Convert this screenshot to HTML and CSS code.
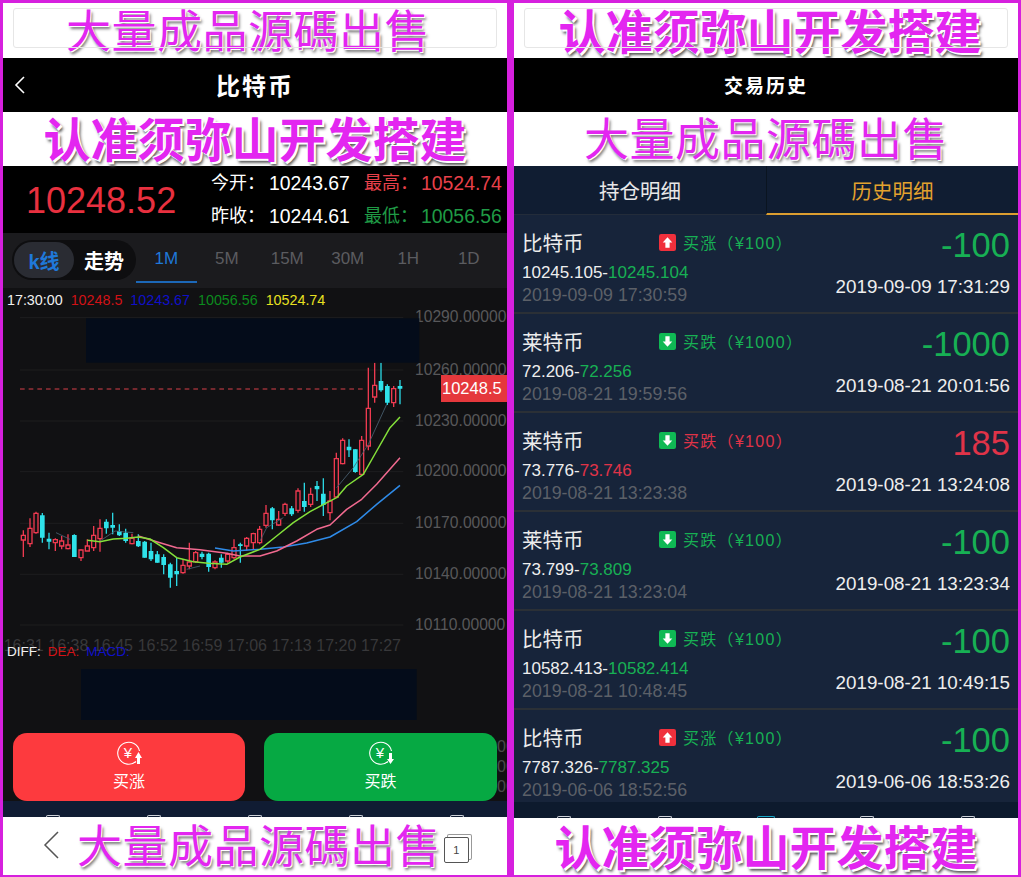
FILE: index.html
```html
<!DOCTYPE html>
<html lang="zh">
<head>
    <meta charset="UTF-8">
    <meta name="viewport" content="width=device-width, initial-scale=1.0">
    <title>比特币</title>
    <link rel="stylesheet" href="styles.css">
</head>
<body>
    <div class="screens">
        <div class="phone">
            <div class="banner thin framed shift-left">大量成品源碼出售</div>
            <div class="navbar">
                <svg class="back" width="12" height="20" viewBox="0 0 12 20"><path d="M10 2 2 10l8 8" fill="none" stroke="#fff" stroke-width="1.6"/></svg>
                <span>比特币</span>
            </div>
            <div class="banner bold">认准须弥山开发搭建</div>

            <div class="quote">
                <div class="last-price">10248.52</div>
                <div class="quote-grid">
                    <span>今开：</span><span>10243.67</span><span class="red">最高：</span><span class="red">10524.74</span>
                    <span>昨收：</span><span>10244.61</span><span class="green">最低：</span><span class="green">10056.56</span>
                </div>
            </div>

            <div class="periods">
                <div class="switch">
                    <span class="switch-item active">k线</span>
                    <span class="switch-item">走势</span>
                </div>
                <span class="period active">1M</span>
                <span class="period">5M</span>
                <span class="period">15M</span>
                <span class="period">30M</span>
                <span class="period">1H</span>
                <span class="period">1D</span>
            </div>

            <div class="chart">
                <svg class="chart-svg" viewBox="9 -39 1512 1338" width="504" height="446">
                    <g class="grid-lines">
                        <path d="M60 50H1210M60 207H1210M60 360H1210M60 512H1210M60 667H1210M60 820H1210M60 972H1210"/>
                    </g>
                    <path class="last-line" d="M60 264H1090"/>
                    <g class="y-labels">
                        <text x="1245" y="64">10290.00000</text>
                        <text x="1245" y="221">10260.00000</text>
                        <text x="1245" y="374">10230.00000</text>
                        <text x="1245" y="526">10200.00000</text>
                        <text x="1245" y="681">10170.00000</text>
                        <text x="1245" y="834">10140.00000</text>
                        <text x="1245" y="986">10110.00000</text>
                    </g>
                    <g class="x-labels">
                        <text x="71" y="1051">16:31</text>
                        <text x="205" y="1051">16:38</text>
                        <text x="339" y="1051">16:45</text>
                        <text x="473" y="1051">16:52</text>
                        <text x="607" y="1051">16:59</text>
                        <text x="741" y="1051">17:06</text>
                        <text x="875" y="1051">17:13</text>
                        <text x="1009" y="1051">17:20</text>
                        <text x="1143" y="1051">17:27</text>
                    </g>

                    <path class="wick-red" d="M70 688V768M90 652V738M108 632V698M166 712V750M185 705V745M204 700V745M243 745V780M262 715V750M281 675V750M300 655V752M396 698V730M549 775V818M568 725V805M587 750V785M645 778V805M683 755V785M702 715V775M740 708V750M760 695V745M779 675V730M798 612V680M836 630V675M855 605V645M894 562V635M932 560V618M990 570V658M1009 455V590M1028 412V490M1085 405V522M1105 200V448M1124 185V305M1181 255V318"/>
                    <path class="body-red" d="M64 703H76V717H64ZM84 682H96V728H84ZM102 637H114V695H102ZM160 716H172V725H160ZM179 720H191V735H179ZM198 732H210V743H198ZM237 747H249V770H237ZM256 735H268V750H256ZM275 703H287V740H275ZM294 682H306V713H294ZM390 712H402V728H390ZM543 793H555V815H543ZM562 783H574V795H562ZM581 755H593V782H581ZM639 783H651V800H639ZM677 760H689V780H677ZM696 740H708V770H696ZM734 712H746V735H734ZM754 698H766V725H754ZM773 685H785V725H773ZM792 637H804V673H792ZM830 655H842V672H830ZM849 610H861V637H849ZM888 570H900V628H888ZM926 580H938V610H926ZM984 600H996V635H984ZM1003 473H1015V588H1003ZM1022 418H1034V488H1022ZM1079 418H1091V520H1079ZM1099 322H1111V435H1099ZM1118 253H1130V288H1118ZM1175 263H1187V305H1175Z"/>
                    <path class="wick-cyan" d="M127 636V725M147 695V745M223 700V768M319 655V698M338 635V700M358 670V705M377 683V725M415 700V738M434 720V770M453 725V780M472 750V785M491 760V820M511 785V860M530 770V855M606 752V775M626 755V812M664 760V800M721 725V785M817 618V685M875 615V645M913 545V632M951 540V600M970 532V645M1047 415V468M1066 445V515M1143 185V272M1162 250V312M1200 237V310"/>
                    <path class="body-cyan" d="M120 643H134V710H120ZM140 713H154V722H140ZM216 702H230V768H216ZM312 662H326V682H312ZM331 672H345V680H331ZM351 690H365V703H351ZM370 695H384V720H370ZM408 720H422V736H408ZM427 722H441V770H427ZM446 750H460V775H446ZM465 760H479V785H465ZM484 768H498V792H484ZM504 790H518V830H504ZM523 810H537V820H523ZM599 758H613V768H599ZM619 758H633V798H619ZM657 770H671V785H657ZM714 730H728V735H714ZM810 622H824V658H810ZM868 622H882V640H868ZM906 600H920V618H906ZM944 555H958V565H944ZM963 578H977V612H963ZM1040 437H1054V448H1040ZM1059 445H1073V513H1059ZM1136 240H1150V268H1136ZM1155 255H1169V305H1155ZM1193 255H1207V263H1193Z"/>

                    <path class="ma ma-slate" d="M168 695 210 715M300 720 345 690 400 695M560 805 600 795M780 720 800 680 850 650M1010 560 1060 500 1105 430 1160 310"/>
                    <path class="ma ma-blue" d="M645 741 700 750 780 745 850 738 920 726 990 708 1070 662 1130 610 1200 553"/>
                    <path class="ma ma-pink" d="M415 705 470 722 530 740 600 746 680 757 720 765 780 765 830 750 890 720 950 685 990 672 1040 625 1085 595 1130 550 1200 470"/>
                    <path class="ma ma-green" d="M262 718 300 722 340 714 380 712 415 708 450 714 490 740 530 770 580 782 625 787 680 790 720 768 780 745 830 705 880 665 930 632 975 608 1010 590 1040 555 1090 520 1130 450 1170 380 1200 348"/>

                    <rect class="cover" x="258" y="52" width="1000" height="133"/>
                    <rect class="cover" x="243" y="1104" width="1007" height="153"/>
                </svg>

                <div class="legend top-legend">
                    <span class="l-white">17:30:00</span>
                    <span class="l-red">10248.5</span>
                    <span class="l-blue">10243.67</span>
                    <span class="l-green">10056.56</span>
                    <span class="l-yellow">10524.74</span>
                </div>
                <div class="price-tag">10248.5</div>
                <div class="legend diff-legend">
                    <span class="l-white">DIFF:</span>
                    <span class="l-red">DEA:</span>
                    <span class="l-blue">MACD:</span>
                </div>
            </div>

            <div class="actions">
                <div class="trade-btn up">
                    <svg width="26" height="26" viewBox="0 0 26 26"><path d="M20 20.500A11 11 0 1 1 23.500 10" fill="none" stroke="#fff" stroke-width="1.100"/><text x="12" y="17" text-anchor="middle" class="yen">¥</text><path d="M22.500 11 26 17h-2v6h-3v-6h-2z" fill="#fff"/></svg>
                    <span>买涨</span>
                </div>
                <div class="trade-btn down">
                    <svg width="26" height="26" viewBox="0 0 26 26"><path d="M20 20.500A11 11 0 1 1 23.500 10" fill="none" stroke="#fff" stroke-width="1.100"/><text x="12" y="17" text-anchor="middle" class="yen">¥</text><path d="M21 12h3v6h2l-3.500 5L19 18h2z" fill="#fff"/></svg>
                    <span>买跌</span>
                </div>
                <div class="cut-axis"><span>00</span><span>00</span><span>00</span></div>
            </div>

            <div class="tabbar">
                <i></i><i></i><i></i><i></i><i></i>
            </div>
            <div class="banner thin shift-right bottom">
                <svg class="browser-back" width="18" height="30" viewBox="0 0 18 30"><path d="M16 2 3 15l13 13" fill="none" stroke="#555" stroke-width="1.5"/></svg>
                大量成品源碼出售
                <div class="tab-count"><span>1</span></div>
            </div>
        </div>

        <div class="phone">
            <div class="banner bold framed shift-right-small">认准须弥山开发搭建</div>
            <div class="navbar small-title"><span>交易历史</span></div>
            <div class="banner thin">大量成品源碼出售</div>

            <div class="history-tabs">
                <span class="history-tab">持仓明细</span>
                <span class="history-tab active">历史明细</span>
            </div>

            <div class="history">
                <div class="trade">
                    <div class="trade-left">
                        <div class="trade-head">
                            <span class="coin">比特币</span>
                            <svg class="arrow-badge" viewBox="0 0 16 16"><rect width="16" height="16" rx="2" fill="#f0303c"/><path d="M8 3 12.500 8H10v5H6V8H3.500z" fill="#fff"/></svg>
                            <span class="side green-text">买涨（¥100）</span>
                        </div>
                        <div class="prices">10245.105-<span class="green-text">10245.104</span></div>
                        <div class="open-time">2019-09-09 17:30:59</div>
                    </div>
                    <div class="trade-right">
                        <div class="profit green-text">-100</div>
                        <div class="close-time">2019-09-09 17:31:29</div>
                    </div>
                </div>

                <div class="trade">
                    <div class="trade-left">
                        <div class="trade-head">
                            <span class="coin">莱特币</span>
                            <svg class="arrow-badge" viewBox="0 0 16 16"><rect width="16" height="16" rx="2" fill="#0fb954"/><path d="M6 3h4v5h2.500L8 13 3.500 8H6z" fill="#fff"/></svg>
                            <span class="side green-text">买跌（¥1000）</span>
                        </div>
                        <div class="prices">72.206-<span class="green-text">72.256</span></div>
                        <div class="open-time">2019-08-21 19:59:56</div>
                    </div>
                    <div class="trade-right">
                        <div class="profit green-text">-1000</div>
                        <div class="close-time">2019-08-21 20:01:56</div>
                    </div>
                </div>

                <div class="trade">
                    <div class="trade-left">
                        <div class="trade-head">
                            <span class="coin">莱特币</span>
                            <svg class="arrow-badge" viewBox="0 0 16 16"><rect width="16" height="16" rx="2" fill="#0fb954"/><path d="M6 3h4v5h2.500L8 13 3.500 8H6z" fill="#fff"/></svg>
                            <span class="side red-text">买跌（¥100）</span>
                        </div>
                        <div class="prices">73.776-<span class="red-text">73.746</span></div>
                        <div class="open-time">2019-08-21 13:23:38</div>
                    </div>
                    <div class="trade-right">
                        <div class="profit red-text">185</div>
                        <div class="close-time">2019-08-21 13:24:08</div>
                    </div>
                </div>

                <div class="trade">
                    <div class="trade-left">
                        <div class="trade-head">
                            <span class="coin">莱特币</span>
                            <svg class="arrow-badge" viewBox="0 0 16 16"><rect width="16" height="16" rx="2" fill="#0fb954"/><path d="M6 3h4v5h2.500L8 13 3.500 8H6z" fill="#fff"/></svg>
                            <span class="side green-text">买跌（¥100）</span>
                        </div>
                        <div class="prices">73.799-<span class="green-text">73.809</span></div>
                        <div class="open-time">2019-08-21 13:23:04</div>
                    </div>
                    <div class="trade-right">
                        <div class="profit green-text">-100</div>
                        <div class="close-time">2019-08-21 13:23:34</div>
                    </div>
                </div>

                <div class="trade">
                    <div class="trade-left">
                        <div class="trade-head">
                            <span class="coin">比特币</span>
                            <svg class="arrow-badge" viewBox="0 0 16 16"><rect width="16" height="16" rx="2" fill="#0fb954"/><path d="M6 3h4v5h2.500L8 13 3.500 8H6z" fill="#fff"/></svg>
                            <span class="side green-text">买跌（¥100）</span>
                        </div>
                        <div class="prices">10582.413-<span class="green-text">10582.414</span></div>
                        <div class="open-time">2019-08-21 10:48:45</div>
                    </div>
                    <div class="trade-right">
                        <div class="profit green-text">-100</div>
                        <div class="close-time">2019-08-21 10:49:15</div>
                    </div>
                </div>

                <div class="trade">
                    <div class="trade-left">
                        <div class="trade-head">
                            <span class="coin">比特币</span>
                            <svg class="arrow-badge" viewBox="0 0 16 16"><rect width="16" height="16" rx="2" fill="#f0303c"/><path d="M8 3 12.500 8H10v5H6V8H3.500z" fill="#fff"/></svg>
                            <span class="side green-text">买涨（¥100）</span>
                        </div>
                        <div class="prices">7787.326-<span class="green-text">7787.325</span></div>
                        <div class="open-time">2019-06-06 18:52:56</div>
                    </div>
                    <div class="trade-right">
                        <div class="profit green-text">-100</div>
                        <div class="close-time">2019-06-06 18:53:26</div>
                    </div>
                </div>
            </div>

            <div class="tabbar navy">
                <i></i><i></i><i class="current"></i><i></i><i></i>
            </div>
            <div class="banner bold bottom">认准须弥山开发搭建</div>
        </div>
    </div>
</body>
</html>
```

FILE: styles.css
```css
* {
    box-sizing: border-box;
}
html, body {
    margin: 0;
    height: 100%;
    overflow: hidden;
}
body {
    background: #d620de;
    font-family: "Liberation Sans", "Noto Sans CJK SC", sans-serif;
    color: #fff;
    text-spacing-trim: space-all;
}
.screens {
    display: grid;
    grid-template-columns: 504px 504px;
    column-gap: 7px;
    padding: 3px 3px 0 3px;
    height: 875px;
}
.phone {
    display: flex;
    flex-direction: column;
    height: 872px;
    overflow: hidden;
    background: #111113;
}

/* promo strips */
.banner {
    position: relative;
    flex: none;
    height: 54px;
    display: flex;
    align-items: center;
    justify-content: center;
    padding-bottom: 5px;
    background: #fff;
    color: #e326f0;
    white-space: nowrap;
    font-family: "Noto Sans CJK SC", sans-serif;
}
.banner.thin {
    font-size: 45px;
    font-weight: 400;
    letter-spacing: 0.5px;
    text-shadow: 1px 1px 0 #fff, 2px 3px 3px #777;
}
.banner.bold {
    font-size: 47px;
    font-weight: 700;
    text-shadow: -1px -1px 0 #fff, 2px 2px 0 #fff, 3px 4px 3px #555;
}
.banner.framed {
    height: 55px;
}
.banner.framed::before {
    content: "";
    position: absolute;
    left: 10px;
    right: 10px;
    top: 5px;
    bottom: 10px;
    border: 1px solid #e6e6e6;
    border-radius: 3px;
}
.banner.bottom {
    height: 58px;
}
.shift-left {
    padding-right: 14px;
}
.shift-right {
    padding-left: 8px;
}
.shift-right-small {
    padding-left: 8px;
}
.browser-back {
    position: absolute;
    left: 39px;
    top: 13px;
}
.tab-count {
    position: absolute;
    left: 441px;
    top: 20px;
    width: 25px;
    height: 26px;
    border: 1px solid #555;
    border-radius: 2px;
    font: 11px "Liberation Sans", sans-serif;
    color: #444;
    text-shadow: none;
    display: flex;
    align-items: center;
    justify-content: center;
    box-shadow: 3px -3px 0 -1px #fff, 3px -3px 0 0 #999;
}

/* title bar */
.navbar {
    position: relative;
    flex: none;
    height: 54px;
    background: #000;
    display: flex;
    align-items: center;
    justify-content: center;
    padding-bottom: 2px;
    font-size: 24px;
    font-weight: 700;
    letter-spacing: 2px;
}
.navbar.small-title {
    font-size: 19px;
}
.back {
    position: absolute;
    left: 11px;
    top: 17px;
}

/* price summary */
.quote {
    flex: none;
    height: 67px;
    background: #000;
    display: flex;
    align-items: center;
}
.last-price {
    width: 208px;
    padding-left: 23px;
    font-size: 36px;
    color: #e8303f;
    margin-top: 2px;
}
.quote-grid {
    display: grid;
    grid-template-columns: 58px 95px 57px auto;
    row-gap: 11px;
    font-size: 19.4px;
    line-height: 22px;
    white-space: nowrap;
}
.quote-grid span:nth-child(4n+1),
.quote-grid span:nth-child(4n+3) {
    font-size: 18px;
}
.quote-grid .red {
    color: #e8404a;
}
.quote-grid .green {
    color: #1f9a45;
}

/* period tabs */
.periods {
    flex: none;
    height: 55px;
    background: #1b1b1e;
    display: flex;
    padding: 0 8px 0 9px;
    align-items: stretch;
}
.switch {
    width: 124px;
    height: 40px;
    margin-top: 7px;
    background: #0e0e10;
    border-radius: 20px;
    display: flex;
    padding: 2px;
    flex: none;
}
.switch-item {
    width: 60px;
    border-radius: 18px;
    display: flex;
    align-items: center;
    justify-content: center;
    font-size: 20px;
    font-weight: 700;
}
.switch-item.active {
    background: #2a2c33;
    color: #1f78d8;
}
.period {
    flex: 1;
    display: flex;
    align-items: center;
    justify-content: center;
    font-size: 17px;
    color: #5b5c60;
    padding-top: 3px;
    border-bottom: 2px solid transparent;
    margin-bottom: 5px;
}
.period.active {
    color: #1f78d8;
    border-bottom-color: #1c68b8;
}

/* kline chart, a free canvas */
.chart {
    position: relative;
    flex: none;
    height: 445px;
    background: #111113;
    overflow: hidden;
}
.chart-svg {
    display: block;
}
.grid-lines path {
    stroke: #242426;
    stroke-width: 2;
    fill: none;
}
.last-line {
    stroke: #d8404a;
    stroke-width: 3.5;
    stroke-dasharray: 14 12;
    fill: none;
}
.y-labels text {
    font-size: 47px;
    fill: #58585a;
}
.x-labels text {
    font-size: 48px;
    fill: #38383a;
    text-anchor: middle;
}
.wick-red {
    stroke: #ee3a50;
    stroke-width: 4;
    fill: none;
}
.body-red {
    stroke: #ee3a50;
    stroke-width: 4;
    fill: #111113;
}
.wick-cyan {
    stroke: #2ad6e2;
    stroke-width: 4;
    fill: none;
}
.body-cyan {
    fill: #2fe2ea;
}
.ma {
    fill: none;
    stroke-width: 4.5;
    stroke-linejoin: round;
}
.ma-slate {
    stroke: #4a6272;
    stroke-width: 2.5;
}
.ma-blue {
    stroke: #2f8be8;
}
.ma-pink {
    stroke: #f26a90;
}
.ma-green {
    stroke: #84e03a;
}
.cover {
    fill: #040c1a;
}
.legend {
    position: absolute;
    display: flex;
    font-size: 14.3px;
    line-height: 16px;
    white-space: nowrap;
}
.top-legend {
    left: 4px;
    top: 4px;
    gap: 8px;
}
.diff-legend {
    left: 4px;
    top: 356px;
    gap: 7px;
    font-size: 13.5px;
}
.l-white {
    color: #f0f0f0;
}
.l-red {
    color: #d21216;
}
.l-blue {
    color: #1010c8;
}
.l-green {
    color: #0c8a1e;
}
.l-yellow {
    color: #e8e020;
}
.price-tag {
    position: absolute;
    left: 438px;
    top: 87px;
    width: 66px;
    height: 27px;
    background: #e5383c;
    font-size: 16.5px;
    line-height: 27px;
    padding-left: 1px;
}

/* buy buttons */
.actions {
    flex: none;
    height: 68px;
    background: #111113;
    display: flex;
    padding-left: 10px;
    gap: 19px;
    position: relative;
}
.trade-btn {
    width: 232px;
    height: 68px;
    border-radius: 14px;
    display: flex;
    flex-direction: column;
    align-items: center;
    font-size: 16px;
    gap: 4px;
    padding-top: 8px;
}
.trade-btn svg {
    flex: none;
}
.trade-btn span {
    line-height: 22px;
}
.trade-btn.up {
    background: #fd3a3e;
}
.trade-btn.down {
    background: #06a943;
    width: 233px;
}
.yen {
    font: 400 15px "Liberation Sans", sans-serif;
    fill: #fff;
}
.cut-axis {
    position: absolute;
    left: 494px;
    top: 5px;
    width: 10px;
    overflow: hidden;
    display: flex;
    flex-direction: column;
    gap: 3px;
    font-size: 16px;
    line-height: 17px;
    color: #4a4a4c;
}

/* bottom tab tips */
.tabbar {
    flex: none;
    height: 16px;
    background: #101c33;
    display: grid;
    grid-template-columns: repeat(5, 1fr);
    justify-items: center;
    align-items: end;
}
.tabbar.navy {
    background: #0d1a2d;
}
.tabbar i {
    display: block;
    width: 14px;
    height: 2px;
    border: 1px solid #cfd3da;
    border-bottom: none;
    border-radius: 7px 7px 0 0;
}
.tabbar i.current {
    width: 18px;
    border-color: #18a8c8;
}

/* history list */
.history-tabs {
    flex: none;
    height: 49px;
    background: #101d32;
    display: grid;
    grid-template-columns: 1fr 1fr;
    font-size: 20.5px;
}
.history-tab {
    display: flex;
    align-items: center;
    justify-content: center;
    border-bottom: 1px solid #232c3a;
    color: #e8e8e8;
}
.history-tab.active {
    color: #e3a22e;
    border-left: 1px solid #0a1420;
    border-bottom: 2px solid #dc9e30;
}
.history {
    flex: none;
    height: 587px;
    overflow: hidden;
}
.trade {
    height: 99px;
    background: #17243a;
    border-bottom: 2px solid #2b3036;
    padding: 0 8px;
    display: flex;
    justify-content: space-between;
}
.trade:last-child {
    border-bottom: none;
}
.trade-left {
    padding-top: 14px;
}
.trade-head {
    display: flex;
    align-items: center;
    height: 29px;
}
.coin {
    width: 137px;
    font-size: 20.5px;
    color: #ececec;
    margin-top: -4px;
}
.arrow-badge {
    width: 17px;
    height: 17px;
    margin-right: 7px;
    margin-top: -2px;
}
.side {
    font-size: 16px;
    letter-spacing: 1.3px;
    margin-top: -3px;
    white-space: nowrap;
}
.prices {
    font-size: 17px;
    line-height: 22px;
    margin-top: 4px;
    color: #eee;
}
.open-time {
    font-size: 17.8px;
    line-height: 22px;
    color: #5c6068;
}
.trade-right {
    display: flex;
    flex-direction: column;
    align-items: flex-end;
    padding-top: 9px;
}
.profit {
    font-size: 34.5px;
    line-height: 42px;
}
.close-time {
    font-size: 18.8px;
    line-height: 22px;
    margin-top: 10px;
    color: #eee;
}
.green-text {
    color: #17b054;
}
.red-text {
    color: #e03348;
}
```
